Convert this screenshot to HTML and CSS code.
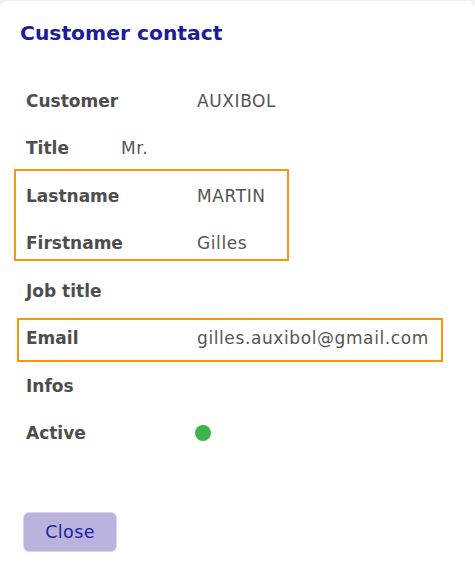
FILE: index.html
```html
<!DOCTYPE html>
<html>
<head>
<meta charset="utf-8">
<link rel="stylesheet" href="styles.css">
</head>
<body>
<div class="card">
  <h1 class="title">Customer contact</h1>
  <div class="rows">
    <div class="row"><span class="label">Customer</span><span class="value">AUXIBOL</span></div>
    <div class="row"><span class="label short">Title</span><span class="value">Mr.</span></div>
    <div class="group group-name">
      <div class="row"><span class="label">Lastname</span><span class="value">MARTIN</span></div>
      <div class="row"><span class="label">Firstname</span><span class="value">Gilles</span></div>
    </div>
    <div class="row"><span class="label">Job title</span><span class="value"></span></div>
    <div class="group group-email">
      <div class="row"><span class="label">Email</span><span class="value">gilles.auxibol@gmail.com</span></div>
    </div>
    <div class="row"><span class="label">Infos</span><span class="value"></span></div>
    <div class="row"><span class="label">Active</span><span class="dot"></span></div>
  </div>
  <button class="close">Close</button>
</div>
</body>
</html>
```
FILE: styles.css
```css
html, body {
  margin: 0;
  padding: 0;
}
body {
  background: #f1f1f1;
  font-family: "DejaVu Sans", "Open Sans", sans-serif;
  width: 475px;
  height: 582px;
  overflow: hidden;
}
.card {
  background: #fff;
  margin-top: 1px;
  margin-left: 0;
  border-radius: 8px;
  height: 600px;
  display: flex;
  flex-direction: column;
  align-items: flex-start;
}
.title {
  margin: 18px 0 0 20px;
  font-size: 20.3px;
  line-height: 28px;
  font-weight: 700;
  color: #1c1c9c;
}
.rows {
  margin-top: 30px;
  display: flex;
  flex-direction: column;
  align-self: stretch;
}
.row {
  height: 47.5px;
  display: flex;
  align-items: center;
  padding-left: 26px;
}
.label {
  width: 171px;
  flex: none;
  font-size: 17px;
  font-weight: 700;
  color: #4d4d4d;
}
.label.short {
  width: 95px;
}
.value {
  font-size: 17px;
  letter-spacing: 0.6px;
  color: #555;
}
.group {
  position: relative;
}
.group::after {
  content: "";
  position: absolute;
  border: 2px solid #f7970e;
  pointer-events: none;
}
.group-name::after {
  left: 14px;
  width: 271px;
  top: -3px;
  bottom: 6px;
}
.group-email::after {
  left: 17px;
  width: 422px;
  top: 3px;
  bottom: 0;
}
.dot {
  width: 16px;
  height: 16px;
  border-radius: 50%;
  background: #3bb54a;
  margin-left: -2px;
}
.close {
  margin: 55px 0 0 23px;
  width: 94px;
  height: 40px;
  border: 1px solid #d9d4ee;
  border-radius: 6px;
  background: #bbb3de;
  color: #22229c;
  font-family: "DejaVu Sans", "Open Sans", sans-serif;
  font-size: 17.5px;
  letter-spacing: 0.4px;
  padding: 0;
}
```
